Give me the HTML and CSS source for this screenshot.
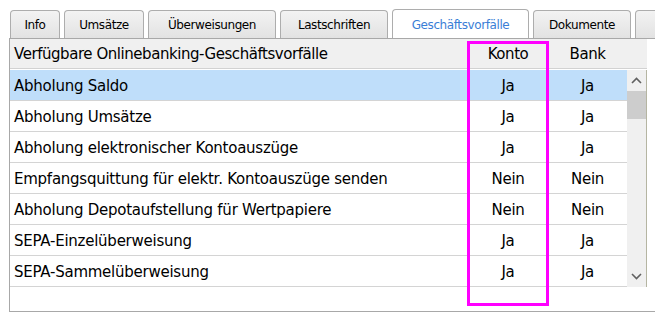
FILE: index.html
```html
<!DOCTYPE html>
<html lang="de">
<head>
    <meta charset="UTF-8">
    <title>Geschäftsvorfälle</title>
    <link rel="stylesheet" href="styles.css">
</head>
<body>
    <div class="window">
        <div class="tabs">
            <div class="tab">Info</div>
            <div class="tab">Umsätze</div>
            <div class="tab">Überweisungen</div>
            <div class="tab">Lastschriften</div>
            <div class="tab active">Geschäftsvorfälle</div>
            <div class="tab">Dokumente</div>
            <div class="tab last"></div>
        </div>
        <div class="panel">
            <div class="grid-head">
                <div class="cell name">Verfügbare Onlinebanking-Geschäftsvorfälle</div>
                <div class="cell">Konto</div>
                <div class="cell">Bank</div>
                <div class="cell"></div>
            </div>
            <div class="list">
                <div class="rows">
                    <div class="row selected"><div class="cell name">Abholung Saldo</div><div class="cell">Ja</div><div class="cell">Ja</div></div>
                    <div class="row"><div class="cell name">Abholung Umsätze</div><div class="cell">Ja</div><div class="cell">Ja</div></div>
                    <div class="row"><div class="cell name">Abholung elektronischer Kontoauszüge</div><div class="cell">Ja</div><div class="cell">Ja</div></div>
                    <div class="row"><div class="cell name">Empfangsquittung für elektr. Kontoauszüge senden</div><div class="cell">Nein</div><div class="cell">Nein</div></div>
                    <div class="row"><div class="cell name">Abholung Depotaufstellung für Wertpapiere</div><div class="cell">Nein</div><div class="cell">Nein</div></div>
                    <div class="row"><div class="cell name">SEPA-Einzelüberweisung</div><div class="cell">Ja</div><div class="cell">Ja</div></div>
                    <div class="row"><div class="cell name">SEPA-Sammelüberweisung</div><div class="cell">Ja</div><div class="cell">Ja</div></div>
                </div>
                <div class="scrollbar">
                    <div class="arrow">
                        <svg width="11" height="7" viewBox="0 0 11 7"><path d="M1 6 L5.5 1.5 L10 6" fill="none" stroke="#606060" stroke-width="1.6"/></svg>
                    </div>
                    <div class="thumb"></div>
                    <div class="track"></div>
                    <div class="arrow">
                        <svg width="11" height="7" viewBox="0 0 11 7"><path d="M1 1 L5.5 5.5 L10 1" fill="none" stroke="#606060" stroke-width="1.6"/></svg>
                    </div>
                </div>
            </div>
            <div class="highlight"></div>
        </div>
    </div>
</body>
</html>
```

FILE: styles.css
```css
body {
    margin: 0;
    background: #ffffff;
    font-family: "DejaVu Sans", sans-serif;
    color: #000000;
    overflow: hidden;
}
.window {
    padding: 9px 0 0 9px;
}
.tabs {
    display: grid;
    grid-template-columns: 50px 80px 128px 108px 137px 98px 60px;
    column-gap: 4px;
    align-items: end;
    height: 29px;
    padding-left: 1px;
    overflow: hidden;
}
.tab {
    height: 28px;
    border: 1px solid #adadad;
    border-bottom: none;
    border-radius: 4px 4px 0 0;
    background: linear-gradient(#f3f3f3, #e2e2e2);
    font-size: 12px;
    letter-spacing: -0.4px;
    display: flex;
    align-items: center;
    justify-content: center;
    box-sizing: border-box;
    padding-top: 1px;
    white-space: nowrap;
    overflow: hidden;
}
.tab.active {
    height: 30px;
    background: #ffffff;
    color: #3a7ed6;
    position: relative;
    z-index: 1;
    margin-bottom: -1px;
}
.panel {
    position: relative;
    border: 1px solid #a8a8a8;
    border-right: none;
    height: 272px;
    background: #ffffff;
}
.grid-head,
.row {
    display: grid;
    grid-template-columns: 458px 80px 79px 20px;
    font-size: 15px;
    letter-spacing: -0.45px;
}
.grid-head {
    height: 29px;
    background: #f0f0f0;
    border-bottom: 1px solid #d2d2d2;
    margin-bottom: 1px;
    width: 637px;
}
.cell {
    display: flex;
    align-items: center;
    justify-content: center;
}
.cell.name {
    justify-content: flex-start;
    padding-left: 4px;
}
.list {
    display: flex;
    width: 637px;
}
.rows {
    width: 617px;
}
.row {
    border-bottom: 1px solid #d4d4d4;
    grid-template-columns: 458px 80px 79px;
    letter-spacing: -0.25px;
    padding-top: 1px;
    box-sizing: border-box;
    height: 31px;
}
.row.selected {
    background: #bfdefa;
}
.scrollbar {
    width: 19px;
    height: 217px;
    background: #f0f0f0;
    border-right: 1px solid #b5b5a2;
    display: flex;
    flex-direction: column;
}
.arrow {
    height: 21px;
    display: flex;
    align-items: center;
    justify-content: center;
}
.thumb {
    height: 28px;
    background: #cdcdcd;
}
.track {
    flex: 1;
}
.highlight {
    position: absolute;
    left: 457px;
    top: 2px;
    width: 82px;
    height: 265px;
    border: 3px solid #ff00ff;
    box-sizing: border-box;
}
```
